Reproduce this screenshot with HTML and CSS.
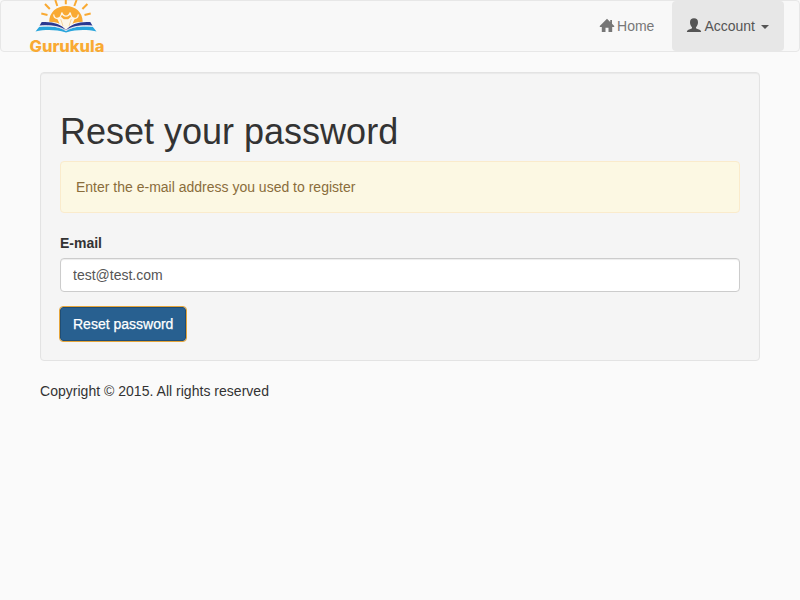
FILE: index.html
```html
<!DOCTYPE html>
<html lang="en">
<head>
<meta charset="utf-8">
<title>Gurukula</title>
<link rel="stylesheet" href="styles.css">
</head>
<body>
<nav class="navbar">
  <a class="brand" href="#" aria-label="Gurukula">
    <svg class="logo" viewBox="20 0 100 60" width="100" height="60">
      <path class="rays" d="M65.800 0v4.300M55.300 0l2 6M76.600 0l-2.300 6M45 4l4.800 5M87.400 4l-5 5M41.300 13.500l6.200 1.400M90.700 13.500l-6.200 1.400"/>
      <path class="sun" d="M49.200 21.800C49.200 12.400 56.500 6 66 6s16.700 6.400 16.700 15.800C75 22 70 24 66 28c-4-4-9-6-16.800-6.200z"/>
      <path class="figures" d="M57 18l4.200-1 2.600 2.300h4.400l2.600-2.300 4.200 1-2.600 6L66 29.500 59.600 24z"/>
      <path class="arms" d="M53.700 14.500c.3 3 1.800 4 3.800 4 2.300 0 3.500-1.500 4.300-6 .7 2.700 2.200 3.600 4.200 3.600s3.500-.9 4.200-3.600c.8 4.500 2 6 4.300 6 2 0 3.500-1 3.800-4"/>
      <path class="lines" d="M60.700 19l2.300 7M71.300 19l-2.300 7"/>
      <g class="heads"><circle cx="57.300" cy="14" r="2.100"/><circle cx="66" cy="11.200" r="2.300"/><circle cx="74.700" cy="14" r="2.100"/></g>
      <path class="book" d="M41.700 22C53 21.300 61 24 66 30 71 24 79 21.300 90.300 22l2.200 3.800C82 24.600 73 26.200 66 30.800 59 26.200 50 24.600 39.500 25.800z"/>
      <path class="pages" d="M39.300 26.800C50 25.700 60 26.800 66 31c6-4.200 16-5.300 26.700-4.200l3.800 4.700C86 29.500 77 29.500 66 32.500 55 29.500 46 29.500 35.500 31.500z"/>
      <path class="edge" d="M39.500 26.200C51 25 60 26.300 66 30.600 72 26.300 81 25 92.500 26.200"/>
      <text class="name" x="29.500" y="52.200" textLength="75" lengthAdjust="spacingAndGlyphs">Gurukula</text>
    </svg>
  </a>
  <ul class="nav">
    <li><a href="#"><svg class="icon" viewBox="0 0 14 14"><path d="M7-.3L10.200 2.900V1h1.800v3.700l2.500 2.500-.7.700H12.200V13H8.500V8.800H5.500V13H1.800V7.900H.2l-.7-.7z"/></svg> <span>Home</span></a></li>
    <li><a class="open" href="#"><svg class="icon" viewBox="0 0 14 14"><path d="M7-.8c2.600 0 4 1.400 4 4 0 2.100-.8 3.900-2 5v1c.6.700 3.700 1.400 4.600 2.200.4.400.5 1 .5 1.700H-.1c0-.7.1-1.300.5-1.700.9-.8 4-1.500 4.600-2.200v-1c-1.200-1.100-2-2.900-2-5 0-2.600 1.400-4 4-4z"/></svg> <span>Account</span> <b class="caret"></b></a></li>
  </ul>
</nav>
<div class="container">
  <main class="well">
    <h1>Reset your password</h1>
    <div class="alert">Enter the e-mail address you used to register</div>
    <form>
      <label for="email">E-mail</label>
      <input id="email" type="text" value="test@test.com">
      <button type="button">Reset password</button>
    </form>
  </main>
  <footer>Copyright © 2015. All rights reserved</footer>
</div>
</body>
</html>
```
FILE: styles.css
```css
* { box-sizing: border-box; }
body {
  margin: 0;
  background: #fafafa;
  color: #333;
  font: 14px/20px "Liberation Sans", Arial, sans-serif;
}
.navbar {
  display: flex;
  justify-content: space-between;
  height: 52px;
  margin-bottom: 20px;
  padding: 0 15px 0 20px;
  border: 1px solid #e7e7e7;
  border-radius: 4px;
  background: #f8f8f8;
}
.brand { display: block; margin: -1px 0 0 -1px; height: 50px; }
.logo { display: block; overflow: visible; }
.sun, .heads, .name { fill: #f9aa33; }
.rays { fill: none; stroke: #f9aa33; stroke-width: 2; }
.figures { fill: #fdf6e8; }
.arms { fill: none; stroke: #fdf6e8; stroke-width: 1.3; }
.lines { fill: none; stroke: #f7cd8c; stroke-width: .8; }
.book { fill: #2b3990; }
.pages { fill: #29a5dc; }
.edge { fill: none; stroke: #fff; stroke-width: .8; }
.name { font: 800 15.5px Inter, sans-serif; }
.nav { display: flex; margin: 0; padding: 0; list-style: none; }
.nav a {
  display: flex;
  align-items: center;
  height: 50px;
  padding: 0 15px;
  color: #777;
  text-decoration: none;
}
.nav li + li { margin-left: 3px; }
.nav .open { border-radius: 4px; background: #e7e7e7; color: #555; }
.icon { width: 14px; height: 14px; margin-right: 3px; fill: currentColor; overflow: visible; }
.caret {
  margin-left: 6px;
  margin-top: 2px;
  border-top: 4px solid;
  border-right: 4px solid transparent;
  border-left: 4px solid transparent;
}
.container { padding: 0 40px; }
.well {
  margin-bottom: 20px;
  padding: 19px;
  border: 1px solid #e3e3e3;
  border-radius: 4px;
  background: #f5f5f5;
  box-shadow: inset 0 1px 1px rgba(0, 0, 0, .05);
}
h1 { margin: 20px 0 10px; font-size: 36px; font-weight: 400; line-height: 39px; }
.alert {
  margin-bottom: 20px;
  padding: 15px;
  border: 1px solid #faebcc;
  border-radius: 4px;
  background: #fcf8e3;
  color: #8a6d3b;
}
label { display: block; margin-bottom: 5px; font-weight: 700; }
input {
  display: block;
  width: 100%;
  height: 34px;
  margin-bottom: 15px;
  padding: 6px 12px;
  border: 1px solid #ccc;
  border-radius: 4px;
  background: #fff;
  box-shadow: inset 0 1px 1px rgba(0, 0, 0, .075);
  color: #555;
  font: inherit;
}
button {
  display: block;
  height: 34px;
  padding: 6px 12px;
  border: 1px solid #204d74;
  border-radius: 3px;
  outline: 1px solid #e5a53a;
  outline-offset: 0;
  background: #286090;
  color: #fff;
  font: inherit;
  -webkit-text-stroke: .25px #fff;
}
footer { letter-spacing: .02px; }
```
